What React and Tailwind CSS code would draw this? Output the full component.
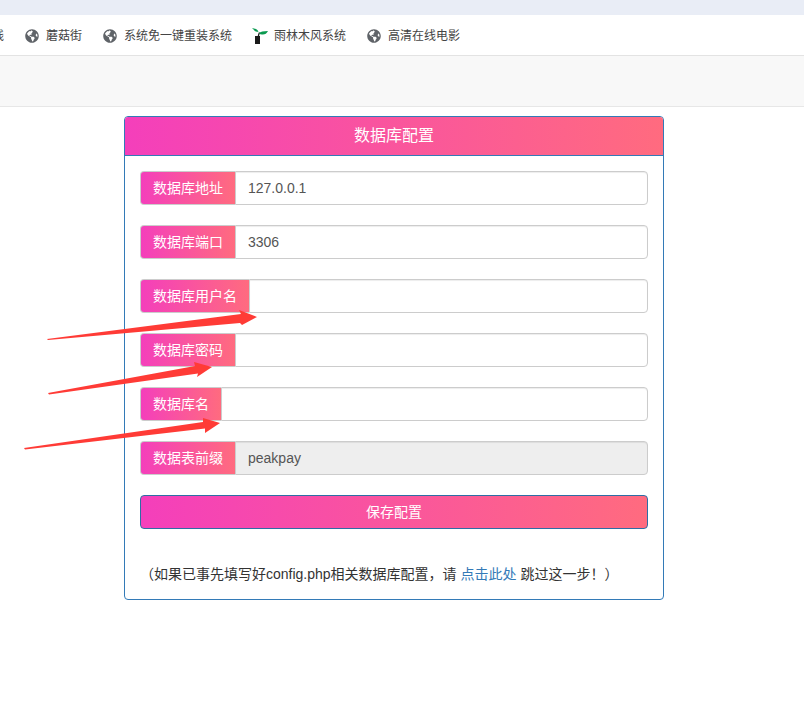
import React from 'react';
import { FaGlobeAmericas } from 'react-icons/fa';

const font = "font-['Liberation_Sans','Noto_Sans_CJK_SC',sans-serif]";
const gradient = 'bg-linear-to-r/srgb from-[#f43fbb] to-[#ff6b7f]';

const fields = [
  { label: '数据库地址', value: '127.0.0.1' },
  { label: '数据库端口', value: '3306' },
  { label: '数据库用户名', value: '' },
  { label: '数据库密码', value: '' },
  { label: '数据库名', value: '' },
  { label: '数据表前缀', value: 'peakpay', disabled: true },
];

const TreeIcon = () => (
  <svg width="16" height="16" viewBox="0 0 16 16" className="shrink-0">
    <path d="M3 8 H8 V16 H3 Z" fill="#1a1a1a" />
    <path d="M5.5 9 Q6 6 7 4 L8 5 Q7 7 7 9 Z" fill="#1a1a1a" />
    <path d="M0 0 L4 1 Q6 2 6.5 4 Q3 4 2 2 Z" fill="#0a9a50" />
    <path d="M7 5 Q9 3 16 3 Q14 7 10 6.5 Q8 6.5 7 5 Z" fill="#0a9a50" />
  </svg>
);

const Bookmark = ({ icon, label, className }) => (
  <div className={`flex items-center gap-[6px] shrink-0 ${className}`}>
    {icon}
    <span className="text-[12px] text-[#444]">{label}</span>
  </div>
);

const Globe = () => <FaGlobeAmericas className="w-[14px] h-[14px] text-[#5f6368] shrink-0 mr-px" />;

const Field = ({ label, value, disabled }) => (
  <div className="flex h-[34px] mb-5 text-[14px]">
    <span className={`flex items-center px-3 text-white rounded-l border border-[#ccc] border-r-0 ${gradient}`}>
      {label}
    </span>
    <input
      readOnly
      value={value}
      className={`flex-1 min-w-0 px-3 text-[14px] text-[#555] rounded-r border border-[#ccc] shadow-[inset_0_1px_1px_rgba(0,0,0,0.075)] outline-none ${disabled ? 'bg-[#eee]' : 'bg-white'}`}
    />
  </div>
);

const Arrows = () => (
  <svg width="804" height="717" className="absolute inset-0 pointer-events-none">
    <polygon points="47,339 241,314 239,310 257,317 242,325 240,323 48,340" fill="#ff3b36" />
    <polygon points="48,393 195,366 194,362 212,367 197,377 198,373.5 49,394.5" fill="#ff3b36" />
    <polygon points="24,448 203,422 203,418 220,423 205,433 205,428.5 25,449.5" fill="#ff3b36" />
  </svg>
);

export default function App() {
  return (
    <div className={`relative w-[804px] h-[717px] overflow-hidden bg-white ${font}`}>
      <div className="h-[15px] bg-[#e9edf6]" />

      {/* bookmarks */}
      <div className="flex items-center h-[41px] pt-[2px] border-b border-[#e3e3e3] overflow-hidden">
        <span className="text-[12px] text-[#444] ml-[-8px] shrink-0">线</span>
        <Bookmark icon={<Globe />} label="蘑菇街" className="ml-[21px]" />
        <Bookmark icon={<Globe />} label="系统免一键重装系统" className="ml-[21px]" />
        <Bookmark icon={<TreeIcon />} label="雨林木风系统" className="ml-[20px]" />
        <Bookmark icon={<Globe />} label="高清在线电影" className="ml-[21px]" />
      </div>

      <div className="h-[51px] bg-[#f8f8f8] border-b border-[#e7e7e7]" />

      <div className="w-[540px] h-[484px] ml-[124px] mt-[9px] border border-[#337ab7] rounded bg-white">
        <div className={`h-[39px] flex items-center justify-center text-[16px] text-white border-b border-[#337ab7] rounded-t-[3px] ${gradient}`}>
          数据库配置
        </div>
        <div className="p-[15px]">
          {fields.map((f) => (
            <Field key={f.label} {...f} />
          ))}
          <button className={`w-full h-[34px] flex items-center justify-center text-[14px] text-white border border-[#2e6da4] rounded ${gradient}`}>
            保存配置
          </button>
          <p className="mt-[35px] text-[14px] leading-5 text-[#333]">
            （如果已事先填写好config.php相关数据库配置，请 <a className="text-[#337ab7]">点击此处</a> 跳过这一步！）
          </p>
        </div>
      </div>

      <Arrows />
    </div>
  );
}
